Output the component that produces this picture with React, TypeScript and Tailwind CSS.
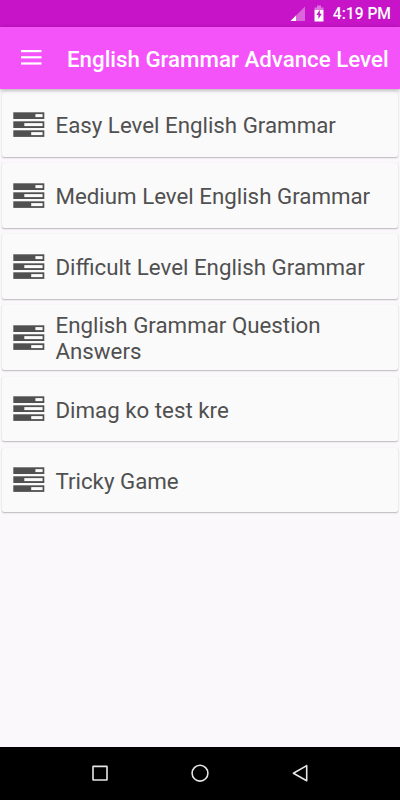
const menuItems = [
  'Easy Level English Grammar',
  'Medium Level English Grammar',
  'Difficult Level English Grammar',
  'English Grammar Question Answers',
  'Dimag ko test kre',
  'Tricky Game',
];

const TasksIcon = () => (
  <svg width="32" height="25" viewBox="0 0 32 25" className="shrink-0">
    <g fill="#505050">
      <rect x="0.3" y="0.3" width="31" height="6.7" />
      <rect x="0.3" y="9.3" width="31" height="6.7" />
      <rect x="0.3" y="18.3" width="31" height="6.6" />
    </g>
    <g fill="#fafafa">
      <rect x="22.4" y="2.1" width="7.2" height="3" />
      <rect x="11.3" y="11.1" width="18.3" height="3" />
      <rect x="18.2" y="20.1" width="11.4" height="3" />
    </g>
  </svg>
);

const StatusBar = () => (
  <div className="flex h-[26.6px] shrink-0 items-center justify-end bg-[#c814c8] pt-px pr-[9px] text-white">
    <svg width="16" height="16" viewBox="0 0 16 16" className="mr-[8px]">
      <path d="M0.5 15L15 0.5V15Z" fill="#fff" fillOpacity="0.35" />
      <path d="M0.5 15L6 9.5V15Z" fill="#fff" />
    </svg>
    <svg width="10" height="18" viewBox="0 0 10 18" className="mr-[9px]">
      <path d="M3 0.5H7V2.5H9.5V5H0.5V2.5H3Z" fill="#fff" fillOpacity="0.4" />
      <path d="M0.5 5H9.5V16.5H0.5Z" fill="#fff" />
      <path d="M5.8 4.7L2.4 10.1H4.4V14.1L7.8 8.7H5.8Z" fill="#c814c8" />
    </svg>
    <span className="pt-px text-[15.6px] leading-none font-medium">4:19 PM</span>
  </div>
);

const AppBar = () => (
  <header className="relative z-10 flex h-[62.4px] shrink-0 items-center bg-[#f553fa] pl-[21px] shadow-[0_1px_4px_rgba(0,0,0,0.35)]">
    <svg width="21" height="15" viewBox="0 0 21 15" fill="#fff">
      <rect y="0" width="20.5" height="2.2" />
      <rect y="6.2" width="20.5" height="2.2" />
      <rect y="12.4" width="20.5" height="2.2" />
    </svg>
    <h1 className="ml-[25px] pt-[2px] text-[22.3px] leading-none font-medium whitespace-nowrap text-white">
      English Grammar Advance Level
    </h1>
  </header>
);

const NavigationBar = () => (
  <nav className="flex h-[53.3px] shrink-0 items-center justify-center gap-[80px] bg-black">
    <svg width="20" height="20" viewBox="0 0 20 20" fill="none" stroke="#e6e6e6" strokeWidth="1.6">
      <rect x="3" y="3.4" width="14" height="13.6" rx="0.3" />
    </svg>
    <svg width="20" height="20" viewBox="0 0 20 20" fill="none" stroke="#e6e6e6" strokeWidth="1.6">
      <circle cx="10" cy="10.2" r="7.9" />
    </svg>
    <svg width="20" height="20" viewBox="0 0 20 20" fill="none" stroke="#e6e6e6" strokeWidth="1.6" strokeLinejoin="round">
      <path d="M3.4 10.2L16.7 2.6V17.8Z" />
    </svg>
  </nav>
);

const App = () => {
  return (
    <div className="flex h-screen w-full flex-col bg-[#fbf8fc] font-['Roboto',sans-serif]">
      <StatusBar />
      <AppBar />
      <main className="flex flex-1 flex-col gap-[6.6px] px-[2.2px] pt-[3.2px]">
        {menuItems.map((item) => (
          <button
            key={item}
            className="flex h-[64.5px] items-center rounded-[2px] bg-[#fafafa] pl-[11px] text-left shadow-[0_1px_1.5px_rgba(0,0,0,0.25),0_0_1px_rgba(0,0,0,0.1)]"
          >
            <TasksIcon />
            <span className="ml-[10.3px] w-[320px] pt-[1.5px] text-[22.3px] leading-[26px] text-[#505050]">
              {item}
            </span>
          </button>
        ))}
      </main>
      <NavigationBar />
    </div>
  );
};

export default App;
